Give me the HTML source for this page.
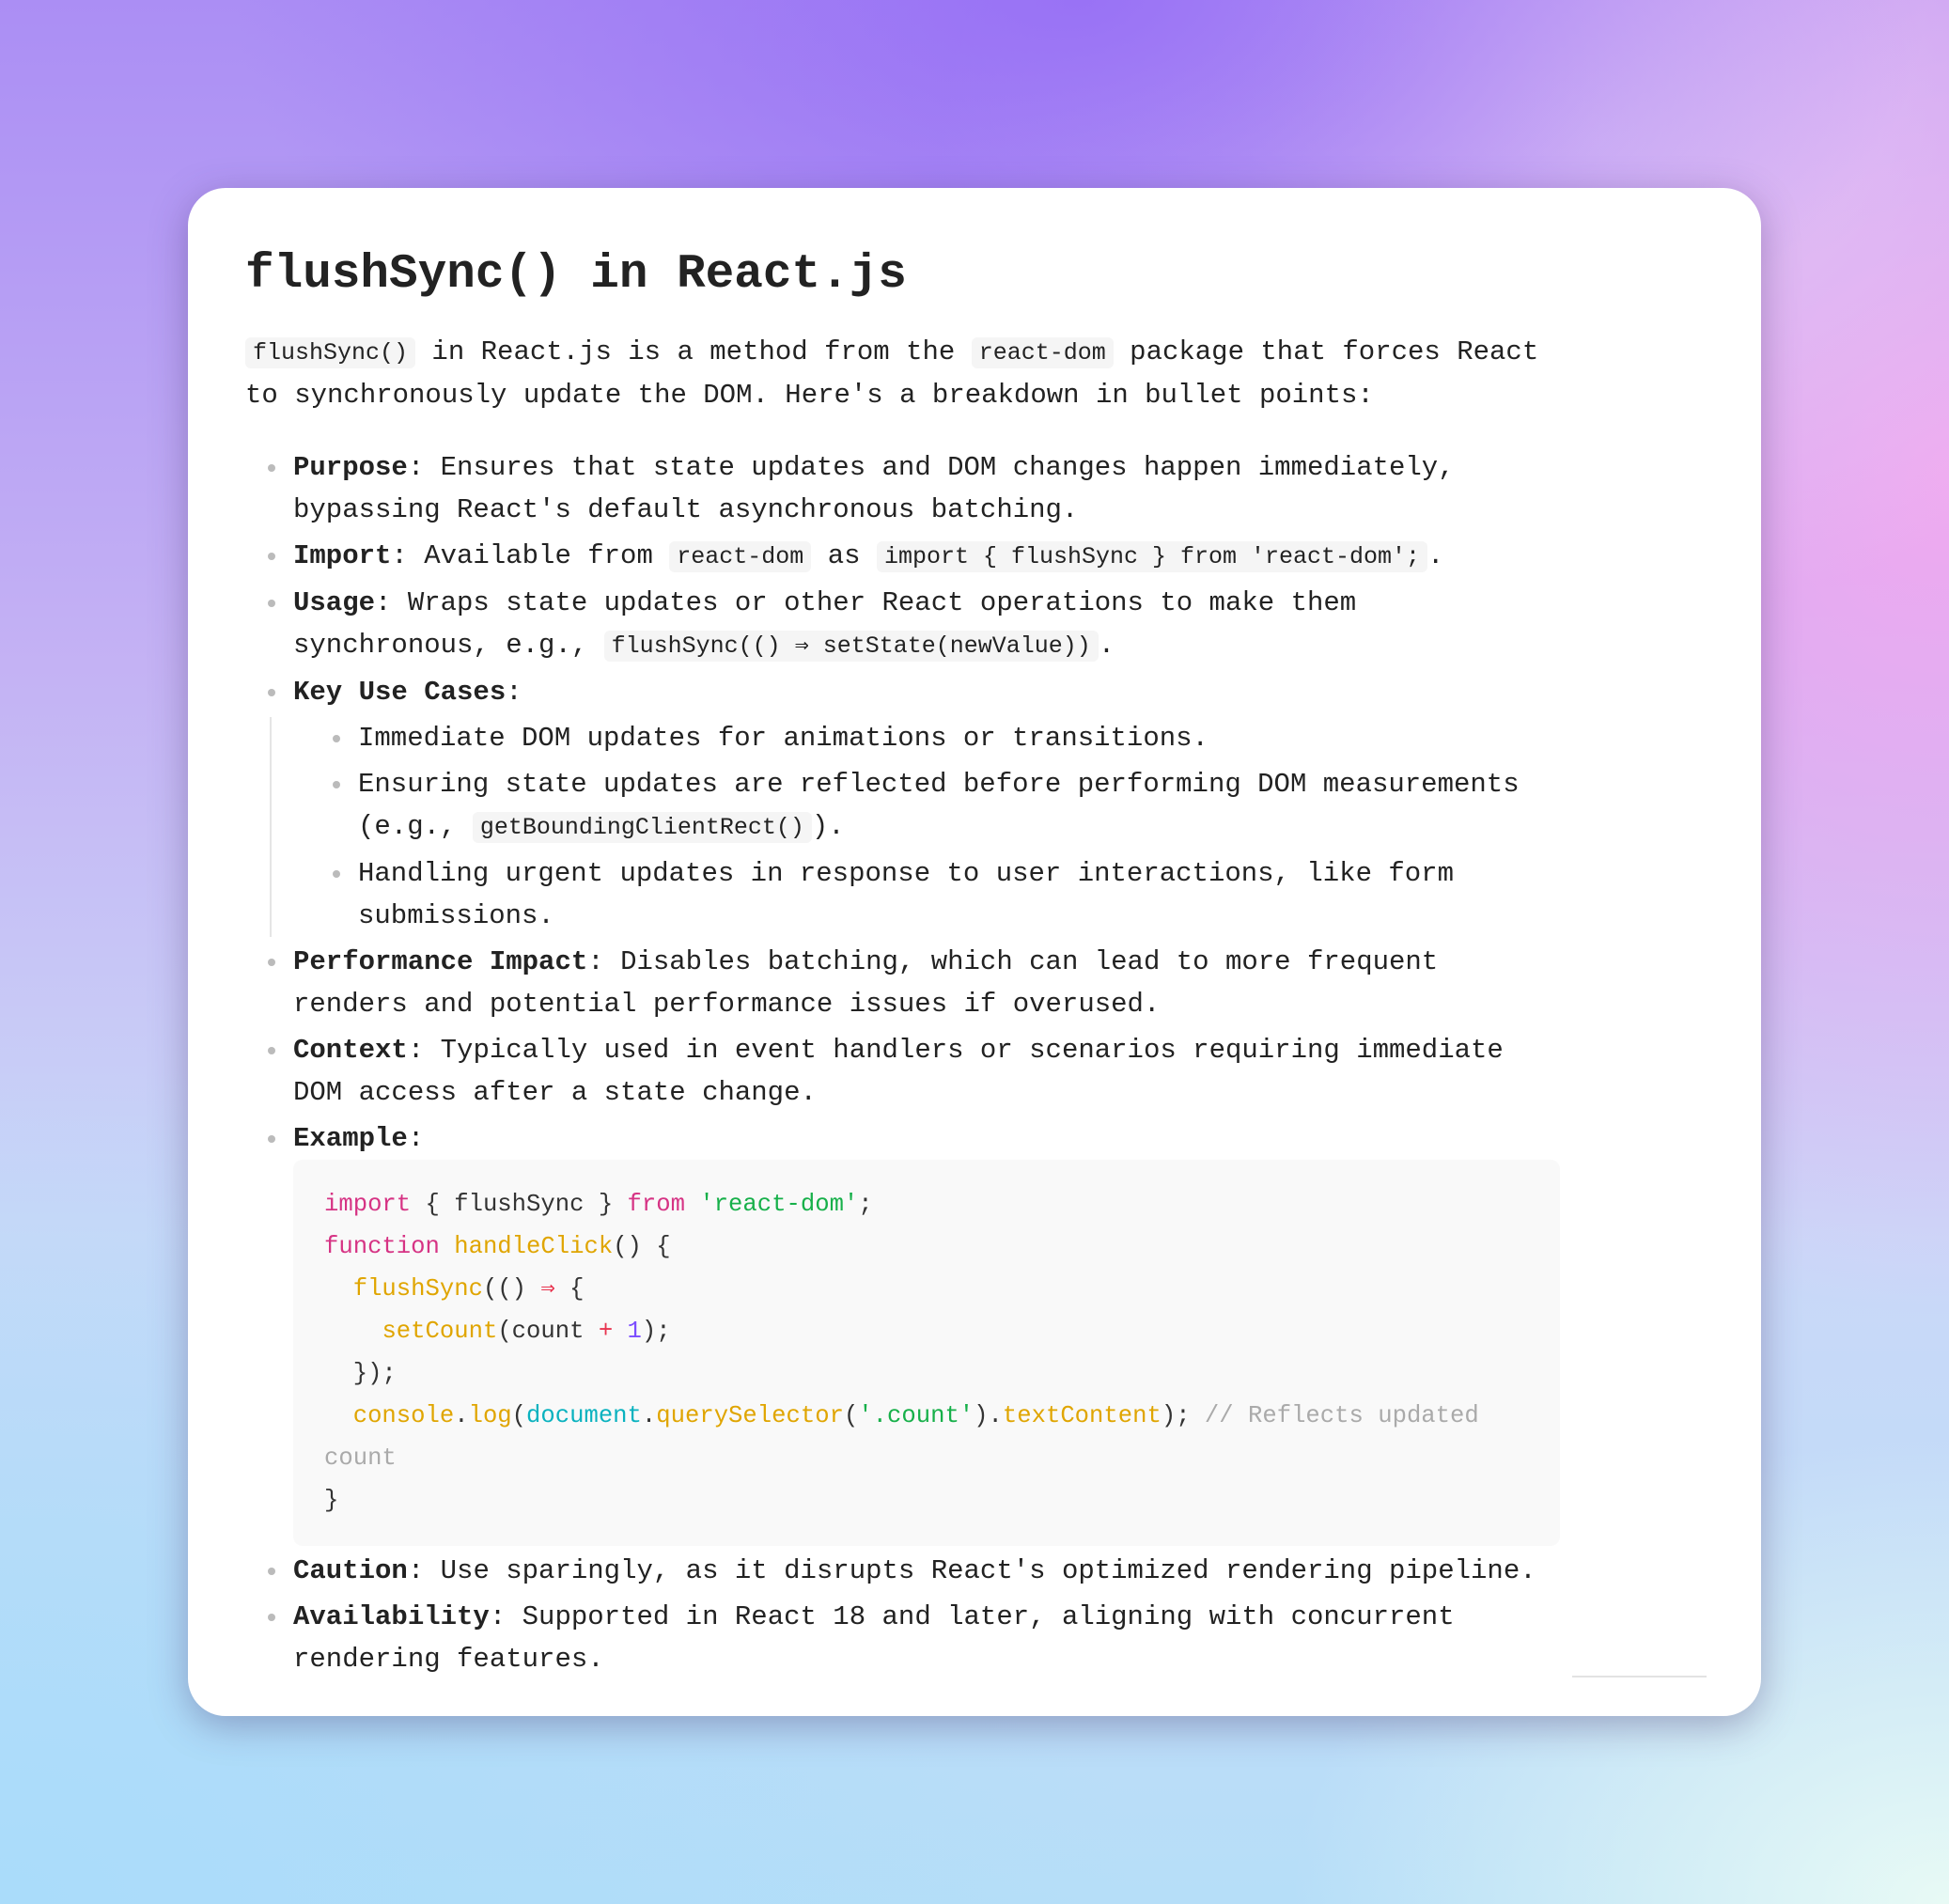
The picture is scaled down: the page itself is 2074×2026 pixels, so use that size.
<!DOCTYPE html>
<html><head><meta charset="utf-8"><style>
*{margin:0;padding:0;box-sizing:border-box}
html,body{width:2074px;height:2026px;overflow:hidden}
body{position:relative;font-family:"Liberation Mono","DejaVu Sans Mono",monospace;color:#222;
background:
radial-gradient(ellipse 900px 500px at 1150px 0px,rgba(150,110,245,0.9),rgba(150,110,245,0) 100%),
radial-gradient(ellipse 700px 500px at 1700px 150px,rgba(225,200,245,0.9),rgba(225,200,245,0) 100%),
radial-gradient(ellipse 800px 900px at 2074px 500px,rgba(240,170,240,1),rgba(240,170,240,0) 100%),
radial-gradient(ellipse 1200px 900px at 0px 2026px,rgba(170,220,250,1),rgba(170,220,250,0) 100%),
radial-gradient(ellipse 700px 500px at 2074px 2026px,rgba(232,250,245,1),rgba(232,250,245,0) 100%),
linear-gradient(180deg,#ab8ef4 0%,#c4b2f4 35%,#cad8f8 65%,#b6def8 100%);}
.card{position:absolute;left:200px;top:200px;width:1674px;height:1626px;background:#fff;border-radius:40px;box-shadow:0 10px 40px rgba(60,40,100,0.35)}
h1{position:absolute;left:261px;top:263px;font-size:51px;font-weight:bold;line-height:60px;white-space:nowrap;color:#222}
.p{position:absolute;left:261px;top:352px;font-size:29px;line-height:45px;white-space:nowrap}
code{font-family:inherit;font-size:25px;background:#f5f5f5;border-radius:6px;padding:2px 8px}
ul{position:absolute;left:312px;top:475px;list-style:none;font-size:29px;line-height:45px;white-space:nowrap}
li{position:relative;margin-bottom:4px}
li:before{content:"";position:absolute;left:-27px;top:19px;width:8px;height:8px;border-radius:50%;background:#bbb}
ul ul{position:relative;left:0;top:0;margin-left:-25px;padding-left:92px;border-left:2px solid #e5e5e5;margin-top:4px}
ul ul li:before{left:-27px}
b{font-weight:bold}
pre{font-family:inherit;background:#f9f9f9;border-radius:10px;width:1348px;padding:25px 33px 26px 33px;font-size:25.6px;line-height:45px;margin-top:0;color:#333}
.k{color:#d63384}.s{color:#17b04a}.f{color:#e0a500}.c{color:#0ab2bf}.n{color:#7c4dff}.o{color:#e8344f}.cm{color:#aaa}
.line{position:absolute;left:1673px;top:1783px;width:143px;height:2px;background:#e3e3e3}
</style></head><body>
<div class="card"></div>
<h1>flushSync() in React.js</h1>
<div class="p"><code>flushSync()</code> in React.js is a method from the <code>react-dom</code> package that forces React<br>to synchronously update the DOM. Here's a breakdown in bullet points:</div>
<ul>
<li><b>Purpose</b>: Ensures that state updates and DOM changes happen immediately,<br>bypassing React's default asynchronous batching.</li>
<li><b>Import</b>: Available from <code>react-dom</code> as <code>import { flushSync } from 'react-dom';</code>.</li>
<li><b>Usage</b>: Wraps state updates or other React operations to make them<br>synchronous, e.g., <code>flushSync(() ⇒ setState(newValue))</code>.</li>
<li><b>Key Use Cases</b>:
<ul>
<li>Immediate DOM updates for animations or transitions.</li>
<li>Ensuring state updates are reflected before performing DOM measurements<br>(e.g., <code>getBoundingClientRect()</code>).</li>
<li>Handling urgent updates in response to user interactions, like form<br>submissions.</li>
</ul></li>
<li><b>Performance Impact</b>: Disables batching, which can lead to more frequent<br>renders and potential performance issues if overused.</li>
<li><b>Context</b>: Typically used in event handlers or scenarios requiring immediate<br>DOM access after a state change.</li>
<li><b>Example</b>:
<pre><span class="k">import</span> { flushSync } <span class="k">from</span> <span class="s">'react-dom'</span>;
<span class="k">function</span> <span class="f">handleClick</span>() {
  <span class="f">flushSync</span>(() <span class="o">⇒</span> {
    <span class="f">setCount</span>(count <span class="o">+</span> <span class="n">1</span>);
  });
  <span class="f">console</span>.<span class="f">log</span>(<span class="c">document</span>.<span class="f">querySelector</span>(<span class="s">'.count'</span>).<span class="f">textContent</span>); <span class="cm">// Reflects updated</span>
<span class="cm">count</span>
}</pre></li>
<li><b>Caution</b>: Use sparingly, as it disrupts React's optimized rendering pipeline.</li>
<li><b>Availability</b>: Supported in React 18 and later, aligning with concurrent<br>rendering features.</li>
</ul>
<div class="line"></div>
</body></html>
